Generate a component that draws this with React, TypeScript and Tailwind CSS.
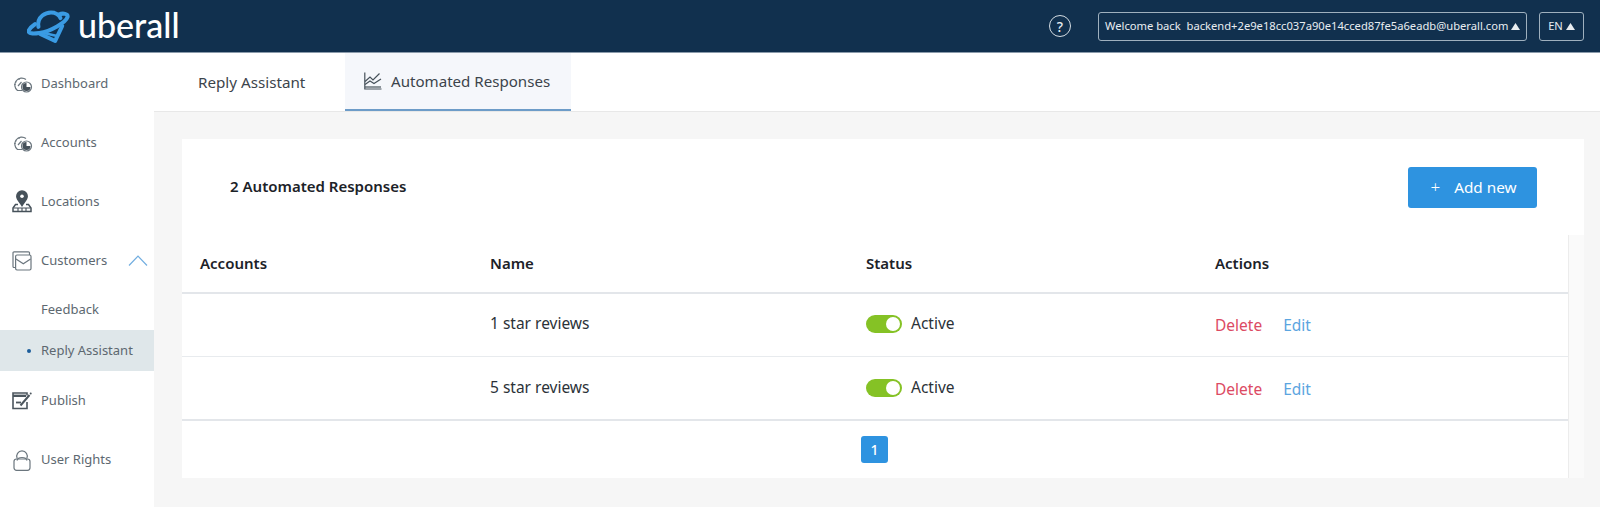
const font = { fontFamily: '"Noto Sans", sans-serif' };

function Logo() {
  return (
    <svg width="44" height="36" viewBox="0 0 50 40" fill="none" stroke="#3a9be4" strokeWidth="4.6" strokeLinejoin="round" strokeLinecap="round">
      <path d="M13 21 C11 10 21 3 31 5 C34 6 37 8 38 11" />
      <path d="M36 7 C41 5 47 6 46 10 C44 16 27 26 14 28 C7 29 1 29 2 25 C3 23 6 20 9 18" />
      <path d="M15 29 L32 37 L40 20" />
      <path d="M19 28 L33 31" strokeWidth="3" />
    </svg>
  );
}

function Gauge() {
  return (
    <svg width="24" height="18" viewBox="0 0 24 18" fill="none" stroke="#6b767e" strokeWidth="1.2">
      <path d="M12 15.5 H7.5 A6.8 6.8 0 1 1 16 4.5" />
      <path d="M6 6.5 v.5 M9 4 v.5 M4.6 9.5 h.5" strokeLinecap="round" />
      <path d="M8 11 L11.5 7" />
      <circle cx="16.5" cy="12" r="5" fill="#fff" />
      <path d="M16.5 8 A4 4 0 1 0 20.5 12 H16.5 Z" fill="#46515a" stroke="none" />
    </svg>
  );
}

function Pin() {
  return (
    <svg width="20" height="23" viewBox="0 0 20 23" fill="none" stroke="#46515a" strokeWidth="1.5">
      <path d="M10 1 A5.2 5.2 0 0 1 15.2 6.2 C15.2 9.5 11.5 13 10 15.5 C8.5 13 4.8 9.5 4.8 6.2 A5.2 5.2 0 0 1 10 1 Z" fill="#46515a" />
      <circle cx="10" cy="6.2" r="1.8" fill="#fff" stroke="none" />
      <path d="M6 14.5 H3.5 L1 18 V21.5 H19 V18 L16.5 14.5 H14" />
      <path d="M1.5 18 H18.5 M6 18 V21.5 M10 18 V21.5 M14 18 V21.5" strokeWidth="1.1" />
    </svg>
  );
}

function Inbox() {
  return (
    <svg width="20" height="20" viewBox="0 0 20 20" fill="none" stroke="#6b767e" strokeWidth="1.2">
      <path d="M3.6 16.5 H2 A1 1 0 0 1 1 15.5 V1.8 A1 1 0 0 1 2 .8 H16.5 A1 1 0 0 1 17.5 1.8 V4" />
      <rect x="3.6" y="4" width="15.4" height="15" rx="1.4" />
      <path d="M4 8 L11.3 12.8 L18.6 8" />
    </svg>
  );
}

function PublishIcon() {
  return (
    <svg width="20" height="18" viewBox="0 0 20 18" fill="none" stroke="#4c565e" strokeWidth="1.6">
      <path d="M15 3.5 V1 H1 V16.5 H15 V10" />
      <path d="M1 3.8 H14" strokeWidth="2.4" />
      <path d="M4 10.5 H9" strokeWidth="1.8" />
      <path d="M8.5 13.5 L17.5 3" strokeWidth="2" />
      <circle cx="18.7" cy="1.4" r="1" fill="#4c565e" stroke="none" />
    </svg>
  );
}

function UserIcon() {
  return (
    <svg width="18" height="22" viewBox="0 0 18 22" fill="none" stroke="#6b767e" strokeWidth="1.2">
      <rect x="1" y="10" width="16" height="11.3" rx="2.5" />
      <path d="M4.2 9.5 A5.3 5.3 0 1 1 13.8 9.5" />
      <path d="M4 11.5 C5 7.5 13 7.5 14 11.5" />
    </svg>
  );
}

function ChartIcon() {
  return (
    <svg width="18" height="18" viewBox="0 0 18 18" fill="none" stroke="#46515a" strokeWidth="1.2">
      <path d="M.8 .5 V17 H17.5" />
      <path d="M1 9.5 L6 5 L9 8 L15.5 1.5" />
      <path d="M1 12.5 L6 9 L10 11.5 L17 7" />
      <path d="M1 15 H17" />
    </svg>
  );
}

function Caret() {
  return (
    <svg width="9" height="7" viewBox="0 0 9 7" className="shrink-0">
      <path d="M4.5 0 L9 7 H0 Z" fill="#e8edf1" />
    </svg>
  );
}

function NavItem({ icon, label, children }: { icon: React.ReactNode; label: string; children?: React.ReactNode }) {
  return (
    <div className="flex h-[59px] items-center">
      <div className="flex w-[41px] shrink-0 justify-center pl-[3px]">{icon}</div>
      <span className="text-[13px] text-[#5d6870]">{label}</span>
      {children}
    </div>
  );
}

function Toggle() {
  return (
    <div className="flex h-[18px] w-[36px] justify-end rounded-full bg-[#85c225] p-[2px]">
      <div className="h-[14px] w-[14px] rounded-full bg-white" />
    </div>
  );
}

function RowCells({ name }: { name: string }) {
  return (
    <>
      <div />
      <div>{name}</div>
      <div className="flex items-center gap-[9px]">
        <Toggle />
        <span>Active</span>
      </div>
      <div className="flex gap-[21px] pt-[4px]">
        <span className="text-[#dc4a63]">Delete</span>
        <span className="text-[#5ba5e0]">Edit</span>
      </div>
    </>
  );
}

export default function App() {
  return (
    <div style={font} className="flex h-[507px] w-[1600px] flex-col overflow-hidden bg-[#f6f6f6]">
      <header className="flex h-[53px] shrink-0 items-center justify-between border-b border-[#8b9bab] bg-[#11304e] pr-[16px] pl-[27px]">
        <div className="flex items-center gap-[7px]">
          <Logo />
          <span style={{ fontFamily: 'Lato, sans-serif' }} className="mt-[-3px] text-[34px] leading-none font-medium text-white">uberall</span>
        </div>
        <div className="flex items-center">
          <div className="mr-[27px] flex h-[22px] w-[22px] items-center justify-center rounded-full border border-[#d5dde3] text-[14px] font-medium text-[#e8edf1]">?</div>
          <div className="flex h-[29px] w-[429px] items-center justify-between rounded-[3px] border-[1.5px] border-[#9fb0be] px-[6px] text-[11.2px] text-[#e8edf1]">
            <span className="whitespace-pre">Welcome back  backend+2e9e18cc037a90e14cced87fe5a6eadb@uberall.com</span>
            <Caret />
          </div>
          <div className="ml-[12px] flex h-[29px] w-[45px] items-center justify-center gap-[3px] rounded-[3px] border-[1.5px] border-[#9fb0be] text-[11.2px] text-[#e8edf1]">
            EN <Caret />
          </div>
        </div>
      </header>
      <div className="flex min-h-0 flex-1">
        <aside className="w-[154px] shrink-0 bg-white pt-[1px]">
          <div>
            <NavItem icon={<Gauge />} label="Dashboard" />
            <NavItem icon={<Gauge />} label="Accounts" />
            <NavItem icon={<Pin />} label="Locations" />
            <NavItem icon={<Inbox />} label="Customers">
              <svg width="20" height="11" viewBox="0 0 20 11" fill="none" stroke="#72aee0" strokeWidth="1.2" className="ml-[21px]">
                <path d="M1 10.5 L10 1 L19 10.5" />
              </svg>
            </NavItem>
          </div>
          <div className="flex h-[40px] items-center pl-[41px] text-[13px] text-[#5d6870]">Feedback</div>
          <div className="flex h-[41px] items-center bg-[#dfe7ea] pt-[1px] text-[13px] text-[#5d6870]">
            <div className="mr-[10px] ml-[27px] h-[4px] w-[4px] rounded-full bg-[#1c5d9b]" />
            Reply Assistant
          </div>
          <NavItem icon={<PublishIcon />} label="Publish" />
          <NavItem icon={<UserIcon />} label="User Rights" />
        </aside>
        <main className="min-w-0 flex-1">
          <nav className="flex h-[59px] items-stretch border-b border-[#e8e8e8] bg-white pl-[44px]">
            <div className="flex w-[147px] items-center text-[15.2px] text-[#3c444b]">Reply Assistant</div>
            <div className="flex w-[226px] items-center gap-[9px] border-b-2 border-[#6d9cc8] bg-[#f5f7fb] pl-[19px] text-[15.1px] text-[#3c444b]">
              <ChartIcon />
              Automated Responses
            </div>
          </nav>
          <section className="mt-[27px] mr-[16px] ml-[28px] h-[339px] bg-white">
            <div className="flex h-[96px] items-center justify-between pr-[47px] pl-[48px]">
              <h2 className="mb-[2px] text-[15px] font-semibold text-[#1c2228]">2 Automated Responses</h2>
              <button className="flex h-[41px] w-[129px] items-center justify-center gap-[14px] rounded-[3px] bg-[#2e93e0] pl-[2px] text-[15.3px] text-white">
                <span className="text-[17px] font-light">+</span>
                Add new
              </button>
            </div>
            <div className="flex h-[243px]">
              <div className="min-w-0 flex-1 border-r border-[#ececec]">
                <div className="grid h-[59px] grid-cols-[308px_376px_349px_1fr] items-center border-b-2 border-[#e3e6ea] text-[15px] font-semibold text-[#1c2228]">
                  <div className="pl-[18px]">Accounts</div>
                  <div>Name</div>
                  <div>Status</div>
                  <div>Actions</div>
                </div>
                <div className="grid h-[63px] grid-cols-[308px_376px_349px_1fr] items-center border-b border-[#e8ebee] pb-[2px] text-[15.5px] text-[#2b3238]">
                  <RowCells name="1 star reviews" />
                </div>
                <div className="grid h-[64px] grid-cols-[308px_376px_349px_1fr] items-center border-b-2 border-[#e3e6ea] text-[15.5px] text-[#2b3238]">
                  <RowCells name="5 star reviews" />
                </div>
                <div className="pt-[15px] pl-[679px]">
                  <div className="flex h-[27px] w-[27px] items-center justify-center rounded-[3px] bg-[#2e93e0] text-[14px] font-medium text-white">1</div>
                </div>
              </div>
              <div className="w-[15px] shrink-0 bg-[#fafafa]" />
            </div>
          </section>
        </main>
      </div>
    </div>
  );
}
